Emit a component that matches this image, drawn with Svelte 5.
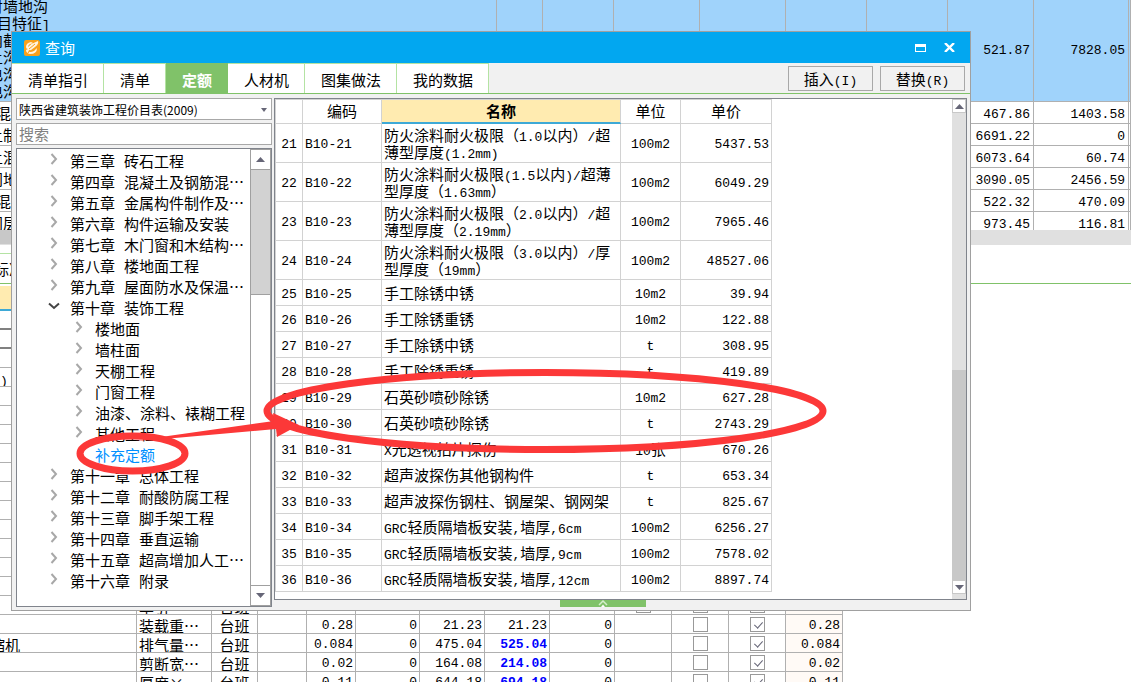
<script lang="ts">
	type Chapter = { no?: string; title: string; level?: number; open?: boolean; active?: boolean };
	type Quota = { no: number; code: string; name: string; unit: string; price: string };

	const tabs = ["清单指引", "清单", "定额", "人材机", "图集做法", "我的数据"];
	let activeTab = $state("定额");
	let keyword = $state("");

	const chapters: Chapter[] = [
		{ no: "第三章", title: "砖石工程" },
		{ no: "第四章", title: "混凝土及钢筋混…" },
		{ no: "第五章", title: "金属构件制作及…" },
		{ no: "第六章", title: "构件运输及安装" },
		{ no: "第七章", title: "木门窗和木结构…" },
		{ no: "第八章", title: "楼地面工程" },
		{ no: "第九章", title: "屋面防水及保温…" },
		{ no: "第十章", title: "装饰工程", open: true },
		{ title: "楼地面", level: 1 },
		{ title: "墙柱面", level: 1 },
		{ title: "天棚工程", level: 1 },
		{ title: "门窗工程", level: 1 },
		{ title: "油漆、涂料、裱糊工程", level: 1 },
		{ title: "其他工程", level: 1 },
		{ title: "补充定额", level: 1, active: true },
		{ no: "第十一章", title: "总体工程" },
		{ no: "第十二章", title: "耐酸防腐工程" },
		{ no: "第十三章", title: "脚手架工程" },
		{ no: "第十四章", title: "垂直运输" },
		{ no: "第十五章", title: "超高增加人工…" },
		{ no: "第十六章", title: "附录" },
	];

	const quotas: Quota[] = [
		["防火涂料耐火极限（1.0以内）/超薄型厚度(1.2mm)", "100m2", "5437.53"],
		["防火涂料耐火极限(1.5以内)/超薄型厚度（1.63mm）", "100m2", "6049.29"],
		["防火涂料耐火极限（2.0以内）/超薄型厚度（2.19mm）", "100m2", "7965.46"],
		["防火涂料耐火极限（3.0以内）/厚型厚度（19mm）", "100m2", "48527.06"],
		["手工除锈中锈", "10m2", "39.94"],
		["手工除锈重锈", "10m2", "122.88"],
		["手工除锈中锈", "t", "308.95"],
		["手工除锈重锈", "t", "419.89"],
		["石英砂喷砂除锈", "10m2", "627.28"],
		["石英砂喷砂除锈", "t", "2743.29"],
		["X光透视拍片探伤", "10张", "670.26"],
		["超声波探伤其他钢构件", "t", "653.34"],
		["超声波探伤钢柱、钢屋架、钢网架", "t", "825.67"],
		["GRC轻质隔墙板安装,墙厚,6cm", "100m2", "6256.27"],
		["GRC轻质隔墙板安装,墙厚,9cm", "100m2", "7578.02"],
		["GRC轻质隔墙板安装,墙厚,12cm", "100m2", "8897.74"],
	].map(([name, unit, price], i) => ({ no: 21 + i, code: `B10-${21 + i}`, name, unit, price }));

	const billLines = ["衬墙地沟", "项目特征]", "内截面", "土沟", "电沟", "电沟"];
	const billRows = [
		["混", "467.86", "1403.58"],
		["土制", "6691.22", "0"],
		["土混", "6073.64", "60.74"],
		["门地", "3090.05", "2456.59"],
		["混", "522.32", "470.09"],
		["门层", "973.45", "116.81"],
	];

	const emptyRows = Array.from({ length: 15 }, (_, i) => (i === 3 ? ")" : ""));
	const machines = [
		{ group: "", name: "牵引…", qty: "0.11", base: "0", price: "1" },
		{ group: "", name: "装载重…", qty: "0.28", base: "21.23", price: "21.23" },
		{ group: "压缩机", name: "排气量…", qty: "0.084", base: "475.04", price: "525.04", changed: true },
		{ group: "", name: "剪断宽…", qty: "0.02", base: "164.08", price: "214.08", changed: true },
		{ group: "", name: "厚度×…", qty: "0.11", base: "644.18", price: "694.18", changed: true },
	];

	// Latin runs use the fixed-width face, everything else the CJK one.
	const runs = (text: string) => text.split(/([\x20-\x7e]+)/).filter(Boolean);
	const isLatin = (run: string) => /^[\x20-\x7e]+$/.test(run);
</script>

{#snippet mixed(text: string)}{#each runs(text) as run}{#if isLatin(run)}<span class="latin">{run}</span>{:else}{run}{/if}{/each}{/snippet}

{#snippet arrow(dir: string)}
	<svg class="arrow" width="9" height="5" viewBox="0 0 9 5" aria-hidden="true">
		<path d={dir === "up" ? "M0 5L4.5 0L9 5z" : "M0 0L4.5 5L9 0z"} />
	</svg>
{/snippet}

<div class="workspace">
	<div class="bill-pane">
		<table class="bill">
			<colgroup>
				<col />
				<col class="w46" /><col class="w71" /><col class="w86" /><col class="w86" />
				<col class="w81" /><col class="w81" /><col class="w86" /><col class="w95" /><col class="w2" />
			</colgroup>
			<tbody>
				<tr class="selected">
					<td class="lines-cell">
						<div class="bill-lines">
							{#each billLines as line, i}
								<div class:wide={i === 1}>{@render mixed(line)}</div>
							{/each}
						</div>
					</td>
					{#each Array(6) as _}<td></td>{/each}
					<td class="num">521.87</td>
					<td class="num">7828.05</td>
					<td></td>
				</tr>
				{#each billRows as [label, price, total]}
					<tr>
						<td class="label"><div class="cut" class:single={label.length === 1}>{label}</div></td>
						{#each Array(6) as _}<td></td>{/each}
						<td class="num">{price}</td>
						<td class="num">{total}</td>
						<td></td>
					</tr>
				{/each}
			</tbody>
		</table>
	</div>
	<div class="hscroll"><div class="hthumb"></div></div>
	<div class="lower-tabs"><span>标准换算</span></div>

	<table class="detail">
		<colgroup>
			<col class="w137" /><col class="w75" /><col class="w46" /><col class="w49" /><col class="w49" />
			<col class="w64" /><col class="w65" /><col class="w65" /><col class="w65" />
			<col class="w57" /><col class="w57" /><col class="w57" /><col class="w57" />
		</colgroup>
		<thead>
			<tr>{#each Array(13) as _}<th></th>{/each}</tr>
		</thead>
		<tbody>
			{#each emptyRows as mark, i}
				<tr class:thick={i < 2}>
					<td class="mark">{@render mixed(mark)}</td>
					{#each Array(12) as _}<td></td>{/each}
				</tr>
			{/each}
			{#each machines as m, i}
				<tr>
					<td><div class="cut group">{m.group}</div></td>
					<td>{m.name}</td>
					<td class="center">台班</td>
					<td></td>
					<td class="num">{m.qty}</td>
					<td class="num">0</td>
					<td class="num">{m.base}</td>
					<td class="num" class:changed={m.changed}>{m.price}</td>
					<td class="num">0</td>
					<td>{#if i === 0}<input type="checkbox" aria-label="暂估" />{/if}</td>
					<td><input type="checkbox" aria-label="锁定数量" /></td>
					<td><input type="checkbox" checked aria-label="是否计价" /></td>
					<td class="num tint">{m.qty}</td>
				</tr>
			{/each}
		</tbody>
	</table>

	<div class="dialog" role="dialog" aria-label="查询">
		<header>
			<svg width="16" height="16" viewBox="0 0 16 16" aria-hidden="true">
				<rect width="16" height="16" rx="2" fill="#f9a11b" />
				<path d="M2 7Q2 3 7 2L9 3Q4 4 4 7Q8 3 14 1Q15 4 11 7L7 10L4 11Q6 13 10 11L13 8Q13 14 6 14Q2 13 2 10L4 9Q2 9 2 7z" fill="#fff4df" />
				<path d="M5 9L11 4M4 13L6 10" stroke="#f9a11b" />
			</svg>
			<span class="caption">查询</span>
			<button class="sys" aria-label="最大化">
				<svg width="11" height="8" viewBox="0 0 11 8"><path d="M0 0H11V8H0zM1 3V7H10V3z" fill="#fff" fill-rule="evenodd" /></svg>
			</button>
			<button class="sys" aria-label="关闭">
				<svg width="11" height="9" viewBox="0 0 11 9"><path d="M1 0L10 9M10 0L1 9" stroke="#fff" stroke-width="2.4" /></svg>
			</button>
		</header>

		<nav>
			{#each tabs as tab}
				<button class="tab" class:active={tab === activeTab} onclick={() => (activeTab = tab)}>{tab}</button>
			{/each}
			<div class="actions">
				<button>{@render mixed("插入(I)")}</button>
				<button>{@render mixed("替换(R)")}</button>
			</div>
		</nav>

		<div class="content">
			<aside>
				<div class="library">
					<select aria-label="定额库">
						<option>陕西省建筑装饰工程价目表(2009)</option>
					</select>
					<svg class="caret" width="6" height="4" viewBox="0 0 6 4" aria-hidden="true"><path d="M0 0H6L3 4z" /></svg>
				</div>
				<input class="search" type="text" placeholder="搜索" aria-label="搜索" bind:value={keyword} />
				<div class="tree">
					<ul>
						{#each chapters as c}
							<li class:child={c.level === 1} class:active={c.active}>
								<span class="toggle">
									{#if c.open}
										<svg width="12" height="8" viewBox="0 0 12 8"><path d="M1 1.5L6 6L11 1.5" stroke="#444" /></svg>
									{:else if !c.active}
										<svg width="8" height="12" viewBox="0 0 8 12"><path d="M1.5 1L6 6L1.5 11" stroke="#a8a8a8" /></svg>
									{/if}
								</span>
								{#if c.no}<span>{c.no}</span>{/if}
								<span>{c.title}</span>
							</li>
						{/each}
					</ul>
					<div class="tree-bar">
						<div class="step">{@render arrow("up")}</div>
						<div class="before"></div>
						<div class="thumb"></div>
						<div class="step">{@render arrow("down")}</div>
					</div>
				</div>
			</aside>

			<main>
				<div class="grid">
					<table class="quota">
						<colgroup>
							<col class="w27" /><col class="w79" /><col class="w239" /><col class="w60" /><col class="w91" />
						</colgroup>
						<thead>
							<tr><th></th><th>编码</th><th class="sorted">名称</th><th>单位</th><th>单价</th></tr>
						</thead>
						<tbody>
							{#each quotas as q}
								<tr class:tall={q.no < 25}>
									<td class="num center">{q.no}</td>
									<td class="num code">{q.code}</td>
									<td class="name">{@render mixed(q.name)}</td>
									{#if isLatin(q.unit)}
										<td class="num center">{q.unit}</td>
									{:else}
										<td class="center">{@render mixed(q.unit)}</td>
									{/if}
									<td class="num">{q.price}</td>
								</tr>
							{/each}
						</tbody>
					</table>
					<div class="grid-bar">
						<div class="step">{@render arrow("up")}</div>
						<div class="before"></div>
						<div class="thumb"></div>
						<div class="step">{@render arrow("down")}</div>
					</div>
				</div>
				<button class="handle" aria-label="展开">
					<svg width="10" height="7" viewBox="0 0 10 7"><path d="M1 5L5 1L9 5" stroke="#d5efcb" fill="none" stroke-width="1.5" /><path d="M3 7L5 4.500L7 7z" fill="#fff" /></svg>
				</button>
			</main>
		</div>

		<!-- red pen marks over the dialog -->
		<svg class="marks" width="840" height="480" viewBox="0 0 840 480" aria-hidden="true">
			<g fill="none" stroke="#fc3838" stroke-width="7">
				<ellipse cx="132.500" cy="453.500" rx="52.500" ry="17.500" />
				<ellipse cx="545" cy="411" rx="278" ry="38.500" />
			</g>
			<path d="M135 441L168 436L274 421L273 413L299 425L277 437L276 429L175 438z" fill="#fc3838" />
		</svg>
	</div>
</div>

<style>
	:global(body) {
		margin: 0;
		background: #fff;
	}

	.workspace {
		position: relative;
		height: 100vh;
		overflow: hidden;
		background: #fff;
		color: #000;
		font: 15px/17px "Noto Sans CJK SC", sans-serif;
		text-spacing-trim: space-all;
	}

	.workspace * {
		box-sizing: border-box;
	}

	button,
	select,
	input {
		margin: 0;
		border: 0;
		padding: 0;
		background: none;
		color: inherit;
		font: inherit;
	}

	svg {
		display: block;
	}

	.latin,
	.num {
		font-family: "Liberation Mono", monospace;
		font-size: 13px;
	}

	/* keeps the second face from stretching the line box */
	.latin {
		line-height: 0;
	}

	.num {
		text-align: right;
	}

	.center {
		text-align: center;
	}

	table {
		border-collapse: separate;
		border-spacing: 0;
		table-layout: fixed;
	}

	td,
	th {
		overflow: hidden;
		white-space: nowrap;
		font-weight: 400;
	}

	.w2 { width: 2px; }
	.w27 { width: 27px; }
	.w46 { width: 46px; }
	.w49 { width: 49px; }
	.w57 { width: 57px; }
	.w60 { width: 60px; }
	.w64 { width: 64px; }
	.w65 { width: 65px; }
	.w71 { width: 71px; }
	.w75 { width: 75px; }
	.w79 { width: 79px; }
	.w81 { width: 81px; }
	.w86 { width: 86px; }
	.w91 { width: 91px; }
	.w95 { width: 95px; }
	.w137 { width: 137px; }
	.w239 { width: 239px; }

	/* bill behind the dialog */
	.bill-pane {
		height: 230px;
		overflow: hidden;
	}

	.bill {
		width: 100%;
	}

	.bill td {
		height: 22px;
		padding: 3px 3px 0 0;
		border-right: 1px solid #b0b0b0;
		border-bottom: 1px solid #b0b0b0;
	}

	.bill .label {
		padding-top: 0;
		line-height: 15px;
	}

	.bill .selected td {
		height: 102px;
		padding-top: 0;
		background: #a0d3fb;
	}

	.bill .lines-cell {
		vertical-align: top;
	}

	.bill-lines {
		margin-top: -3px;
	}

	.bill-lines > div,
	.cut {
		margin-left: -12px;
	}

	.bill-lines > .wide {
		margin-left: -18px;
	}

	.cut.single {
		margin-left: -4px;
	}

	.cut.group {
		margin-left: -27px;
	}

	.hscroll {
		height: 15px;
		background: #e0e0e0;
	}

	.hthumb {
		width: 200px;
		height: 14px;
		background: #c8c8c8;
	}

	.lower-tabs {
		display: flex;
		height: 39px;
		padding-top: 8px;
		border-bottom: 1px solid #80c269;
	}

	.lower-tabs span {
		width: 200px;
		border-top: 1px solid #b4e3a3;
		text-indent: -6px;
		line-height: 30px;
	}

	.detail {
		width: 843px;
		margin-top: 2px;
	}

	.detail th {
		height: 25px;
		padding: 0;
		border-bottom: 2px solid #3ea9d6;
		background: #ffebb0;
	}

	.detail td {
		height: 19px;
		padding: 3px 2px 0;
		border-right: 1px solid #b0b0b0;
		border-bottom: 1px solid #b0b0b0;
		line-height: 15px;
		vertical-align: top;
	}

	.detail .mark {
		padding-left: 0;
	}

	.detail .thick td {
		border-bottom: 2px solid #808080;
		line-height: 14px;
	}

	.detail td:has(input) {
		padding-top: 2px;
	}

	.detail .changed {
		color: #00f;
		font-weight: 700;
	}

	.detail .tint {
		background: #fffaf6;
	}

	.detail input {
		display: block;
		width: 15px;
		height: 15px;
		margin: 0 auto;
		border: 1px solid #999;
		background: #fff;
		appearance: none;
	}

	.detail input:checked::after {
		content: "";
		display: block;
		width: 4px;
		height: 7px;
		margin: 2px 0 0 5px;
		border: solid #667;
		border-width: 0 1px 1px 0;
		transform: rotate(42deg);
	}

	/* dialog */
	.dialog {
		position: absolute;
		top: 31px;
		right: 160px;
		left: 11px;
		border: 1px solid #a0a0a0;
		background: #f1f1f1;
	}

	.dialog header {
		display: flex;
		align-items: center;
		height: 31px;
		padding: 0 15px 0 12px;
		background: #02a7f0;
		color: #fff;
	}

	.caption {
		flex: 1;
		margin-left: 5px;
	}

	.sys {
		margin-left: 18px;
	}

	nav {
		display: flex;
		height: 31px;
		border-bottom: 1px solid #80c269;
	}

	.tab {
		padding: 1px 15px 0 16px;
		border-top: 1px solid #b4e3a3;
		border-right: 1px solid #b4e3a3;
		background: #fff;
	}

	.tab.active {
		border-color: #80c269;
		background: #80c269;
		color: #fff;
		font-weight: 700;
	}

	.actions {
		display: flex;
		gap: 7px;
		margin-left: auto;
		padding: 3px 5px 2px 0;
	}

	.actions button {
		width: 85px;
		border: 1px solid #a8a8a8;
	}

	.content {
		display: flex;
		gap: 2px;
		padding: 4px 3px 3px 4px;
	}

	aside {
		display: flex;
		flex-direction: column;
		gap: 3px;
		width: 256px;
	}

	.library {
		position: relative;
	}

	.library select {
		display: block;
		width: 100%;
		height: 22px;
		padding-left: 2px;
		border: 1px solid #a8a8a8;
		background: #fff;
		font-size: 12px;
		appearance: none;
	}

	.caret {
		position: absolute;
		top: 10px;
		right: 5px;
		fill: #667;
	}

	.search {
		height: 22px;
		padding: 0 2px 2px;
		border: 1px solid #a8a8a8;
		background: #fff;
	}

	.search::placeholder {
		color: #808080;
		opacity: 1;
	}

	.tree {
		display: flex;
		flex: 1;
		border: 1px solid #80848c;
		background: #fff;
	}

	ul {
		flex: 1;
		min-width: 0;
		margin: 0;
		padding: 1px 0 0;
		list-style: none;
	}

	li {
		display: flex;
		align-items: center;
		gap: 9px;
		height: 21px;
		padding-left: 29px;
		white-space: nowrap;
	}

	li.child {
		padding-left: 54px;
	}

	li.active {
		color: #0090ff;
	}

	.toggle {
		display: flex;
		justify-content: center;
		width: 15px;
		padding-bottom: 3px;
	}

	.toggle path {
		fill: none;
		stroke-width: 2;
	}

	.tree-bar,
	.grid-bar {
		display: flex;
		flex-direction: column;
	}

	.tree-bar {
		width: 21px;
		background: #fff;
		border-right: 1px solid #a0a0a0;
		border-left: 1px solid #a0a0a0;
	}

	.step {
		display: grid;
		place-items: center;
		background: #fff;
	}

	.tree-bar .step {
		height: 21px;
		border: solid #a0a0a0;
		border-width: 1px 0;
	}

	.tree-bar .before {
		flex: 3;
		background: #d2d2d2;
	}

	.tree-bar .thumb {
		flex: 7;
		border-top: 1px solid #a0a0a0;
	}

	.arrow {
		fill: #667;
	}

	main {
		flex: 1;
		min-width: 0;
	}

	.grid {
		display: flex;
		justify-content: space-between;
		border: 1px solid #80848c;
		background: #fff;
	}

	.quota {
		width: 497px;
		margin-bottom: 7px;
		border-left: 1px solid #d2d2d2;
	}

	.quota th {
		height: 25px;
		padding: 0 0 2px;
		border: solid #d2d2d2;
		border-width: 1px 1px 1px 0;
	}

	.quota .sorted {
		border-bottom: 2px solid #3ea9d6;
		background: #ffebb0;
		font-weight: 700;
	}

	.quota td {
		height: 26px;
		padding: 0 2px;
		border-right: 1px solid #d2d2d2;
		border-bottom: 1px solid #d2d2d2;
	}

	.quota .num {
		padding-top: 3px;
	}

	.quota .tall td {
		height: 39px;
	}

	.quota .name {
		white-space: normal;
	}

	.quota .code {
		text-align: left;
	}

	.quota .center {
		text-align: center;
	}

	.grid-bar {
		width: 14px;
		background: #e0e0e0;
		padding-bottom: 5px;
	}

	.grid-bar .step {
		height: 14px;
		border: 1px solid #c8c8c8;
	}

	.grid-bar .before {
		flex: 11;
	}

	.grid-bar .thumb {
		flex: 9;
		background: #c8c8c8;
	}

	.handle {
		display: grid;
		place-items: center;
		width: 86px;
		height: 7px;
		margin-left: 286px;
		background: #80c269;
	}

	.marks {
		position: absolute;
		top: -32px;
		left: -12px;
		pointer-events: none;
	}
</style>
